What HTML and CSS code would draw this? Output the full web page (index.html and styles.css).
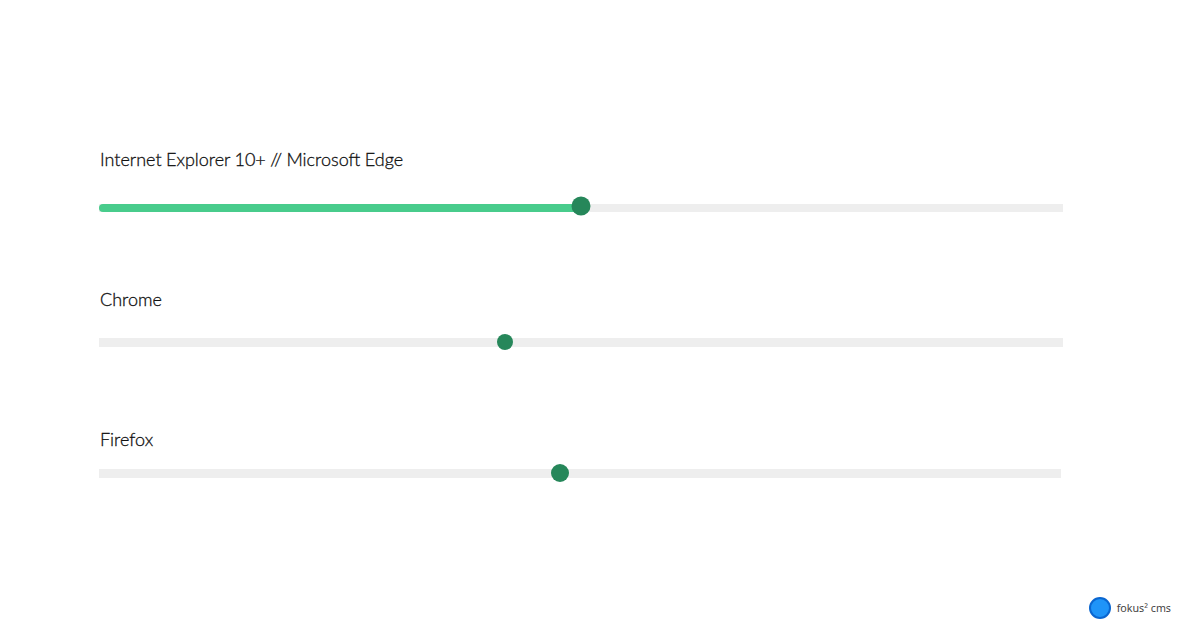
FILE: index.html
```html
<!DOCTYPE html>
<html lang="en">
<head>
    <meta charset="UTF-8">
    <title>Range sliders</title>
    <link rel="stylesheet" href="styles.css">
</head>
<body>
    <main class="sliders">
        <section class="slider slider-ie">
            <h2 class="slider-label">Internet Explorer 10+ // Microsoft Edge</h2>
            <div class="track">
                <div class="fill" style="width: 482px"></div>
                <span class="thumb" style="left: 482px"></span>
            </div>
        </section>
        <section class="slider slider-chrome">
            <h2 class="slider-label">Chrome</h2>
            <div class="track">
                <span class="thumb" style="left: 406px"></span>
            </div>
        </section>
        <section class="slider slider-firefox">
            <h2 class="slider-label">Firefox</h2>
            <div class="track">
                <span class="thumb" style="left: 461px"></span>
            </div>
        </section>
    </main>
    <footer class="brand">
        <span class="brand-logo"></span>
        <span class="brand-name">fokus² cms</span>
    </footer>
</body>
</html>
```

FILE: styles.css
```css
html, body {
    height: 100%;
}
body {
    margin: 0;
    background: #fff;
    color: #111;
    font-family: Lato, "Open Sans", sans-serif;
    display: flex;
    flex-direction: column;
    height: 640px;
    overflow: hidden;
}
.sliders {
    flex: 1;
    padding: 148px 0 0 99px;
}
.slider-label {
    margin: 0 0 0 1px;
    font-size: 18px;
    font-weight: 300;
    line-height: 22px;
    word-spacing: -0.5px;
    -webkit-text-stroke: 0.3px #111;
}
.track {
    position: relative;
    width: 964px;
    height: 9px;
    background: #eee;
}
.fill {
    height: 8px;
    background: #48cc8c;
    border-radius: 4px 0 0 4px;
}
.thumb {
    position: absolute;
    top: 4px;
    width: 16px;
    height: 16px;
    border-radius: 50%;
    background: #26875a;
    transform: translate(-50%, -50%);
}
.slider-ie .track {
    margin-top: 34px;
    height: 8px;
}
.slider-ie .thumb {
    top: 2px;
    width: 19px;
    height: 19px;
}
.slider-chrome {
    margin-top: 76px;
}
.slider-chrome .track {
    margin-top: 28px;
}
.slider-firefox {
    margin-top: 81px;
}
.slider-firefox .track {
    margin-top: 19px;
    width: 962px;
}
.slider-firefox .thumb {
    width: 18px;
    height: 18px;
}
.brand {
    display: flex;
    align-items: center;
    justify-content: flex-end;
    gap: 6px;
    padding: 0 29px 21px 0;
}
.brand-logo {
    width: 18px;
    height: 18px;
    border: 2px solid #0a66d0;
    border-radius: 50%;
    background: #1f94f8;
}
.brand-name {
    font-family: "Noto Sans", sans-serif;
    font-size: 10.7px;
    line-height: 22px;
    color: #444;
}
```
